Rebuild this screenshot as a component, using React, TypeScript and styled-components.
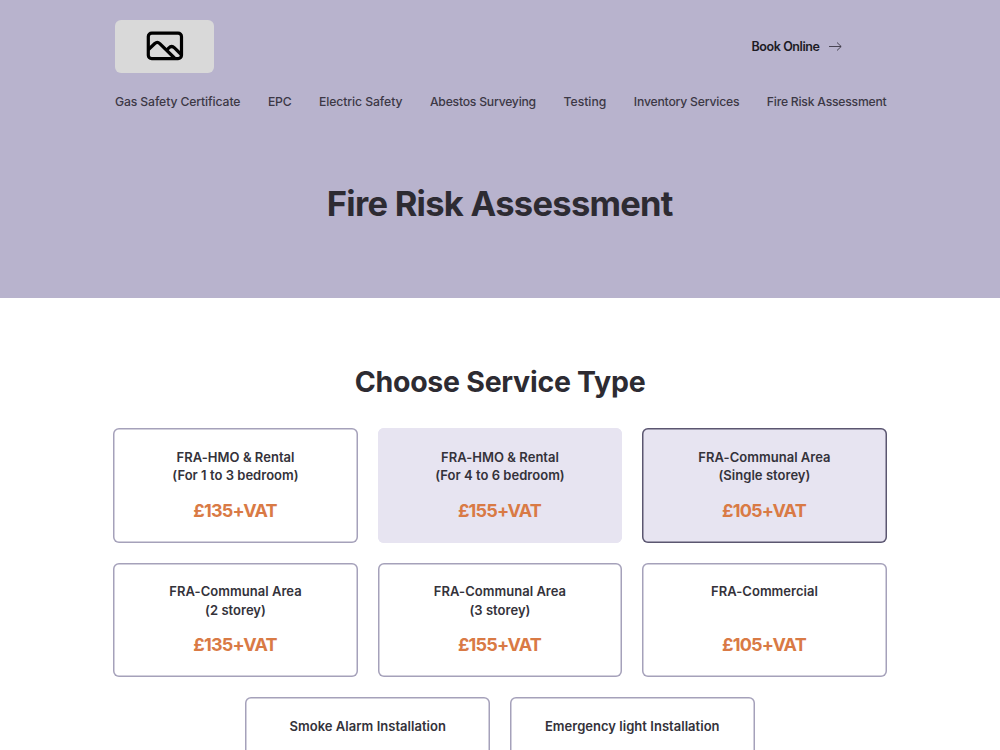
import styled, { createGlobalStyle } from "styled-components";

const GlobalStyle = createGlobalStyle`
  * {
    box-sizing: border-box;
  }
  body {
    margin: 0;
    background: #fff;
    color: #2d2b32;
    font-family: "Inter", sans-serif;
  }
  #root {
    height: 100vh;
    overflow: hidden;
  }
`;

const Header = styled.header`
  height: 297.5px;
  padding: 20px 113.5px 0 115px;
  background: #b8b3cd;
`;

const TopBar = styled.div`
  display: flex;
  justify-content: space-between;
  align-items: center;
  height: 53px;
  padding-right: 45px;
`;

const Logo = styled.div`
  display: flex;
  align-items: center;
  justify-content: center;
  width: 99px;
  height: 53px;
  padding-bottom: 1px;
  border-radius: 6px;
  background: #d9d9d9;
`;

const BookLink = styled.a`
  display: flex;
  align-items: center;
  gap: 9px;
  color: #1d1b24;
  font-size: 12.5px;
  font-weight: 600;
  letter-spacing: -0.42px;
`;

const Nav = styled.nav`
  display: flex;
  justify-content: space-between;
  margin-top: 20px;
`;

const NavLink = styled.a<{ $spacing: number }>`
  font-size: 12.2px;
  line-height: 18px;
  font-weight: 500;
  letter-spacing: ${(props) => props.$spacing}px;
  white-space: nowrap;
  color: #3c3845;
`;

const Title = styled.h1`
  margin: 68px 0 0;
  padding-right: 2px;
  text-align: center;
  font-size: 34.5px;
  line-height: 50px;
  font-weight: 700;
  letter-spacing: -0.72px;
`;

const Main = styled.main`
  padding: 63px 113px 0;
`;

const SubTitle = styled.h2`
  margin: 0 0 26.9px;
  text-align: center;
  font-size: 28.5px;
  line-height: 41px;
  font-weight: 700;
  letter-spacing: -0.27px;
`;

const Cards = styled.div`
  display: flex;
  flex-wrap: wrap;
  justify-content: center;
  gap: 20px 19.7px;
`;

const borders: Record<string, string> = {
  normal: "#a5a1ba",
  hover: "#e7e4f1",
  selected: "#5b5670",
};

// shadow instead of border, a 1.5px border gets rounded down to 1px
const Card = styled.div<{ $state: string }>`
  display: flex;
  flex-direction: column;
  align-items: center;
  justify-content: space-between;
  width: 244.8px;
  height: 114.3px;
  padding: 19.6px 0 18.9px;
  border-radius: 6px;
  box-shadow: inset 0 0 0 1.5px ${(props) => borders[props.$state]};
  background: ${(props) => (props.$state === "normal" ? "#fff" : "#e7e4f1")};
`;

const CardName = styled.div`
  text-align: center;
  white-space: pre-line;
  font-size: 13px;
  line-height: 18.5px;
  font-weight: 600;
  letter-spacing: 0.03px;
  color: #34323a;
`;

const Price = styled.div`
  padding-right: 1px;
  color: #d97a45;
  font-size: 18px;
  line-height: 26px;
  font-weight: 700;
  letter-spacing: -0.8px;
`;

const services = [
  { name: "FRA-HMO & Rental\n(For 1 to 3 bedroom)", price: 135 },
  { name: "FRA-HMO & Rental\n(For 4 to 6 bedroom)", price: 155, state: "hover" },
  { name: "FRA-Communal Area\n(Single storey)", price: 105, state: "selected" },
  { name: "FRA-Communal Area\n(2 storey)", price: 135 },
  { name: "FRA-Communal Area\n(3 storey)", price: 155 },
  { name: "FRA-Commercial", price: 105 },
  { name: "Smoke Alarm Installation" },
  { name: "Emergency light Installation" },
];

const links = [
  { text: "Gas Safety Certificate", spacing: -0.12 },
  { text: "EPC", spacing: -0.2 },
  { text: "Electric Safety", spacing: -0.08 },
  { text: "Abestos Surveying", spacing: -0.23 },
  { text: "Testing", spacing: 0 },
  { text: "Inventory Services", spacing: -0.2 },
  { text: "Fire Risk Assessment", spacing: -0.23 },
];

function App() {
  return (
    <>
      <GlobalStyle />
      <Header>
        <TopBar>
          <Logo>
            <svg width="38" height="30" viewBox="0 0 38 30" fill="none" stroke="#000" strokeWidth="3.2" strokeLinejoin="round">
              <rect x="2.3" y="2.1" width="33.2" height="25.6" rx="3.4" />
              <path d="M2.5 18.500L8.800 12.500Q11.300 10.300 13.800 12.600L28.500 27" />
              <path d="M20.500 19.500L22.700 17Q25.600 14 28.500 16.800L35.200 23.500" />
            </svg>
          </Logo>
          <BookLink>
            Book Online
            <svg width="13" height="10" viewBox="0 0 13 10" fill="none" stroke="#3c3845" strokeWidth="0.9">
              <path d="M0 4.500h12M8 .5l4.200 4L8 8.500" />
            </svg>
          </BookLink>
        </TopBar>
        <Nav>
          {links.map((link) => (
            <NavLink key={link.text} $spacing={link.spacing}>
              {link.text}
            </NavLink>
          ))}
        </Nav>
        <Title>Fire Risk Assessment</Title>
      </Header>
      <Main>
        <SubTitle>Choose Service Type</SubTitle>
        <Cards>
          {services.map((service) => (
            <Card key={service.name} $state={service.state || "normal"}>
              <CardName>{service.name}</CardName>
              {service.price && <Price>£{service.price}+VAT</Price>}
            </Card>
          ))}
        </Cards>
      </Main>
    </>
  );
}

export default App;
